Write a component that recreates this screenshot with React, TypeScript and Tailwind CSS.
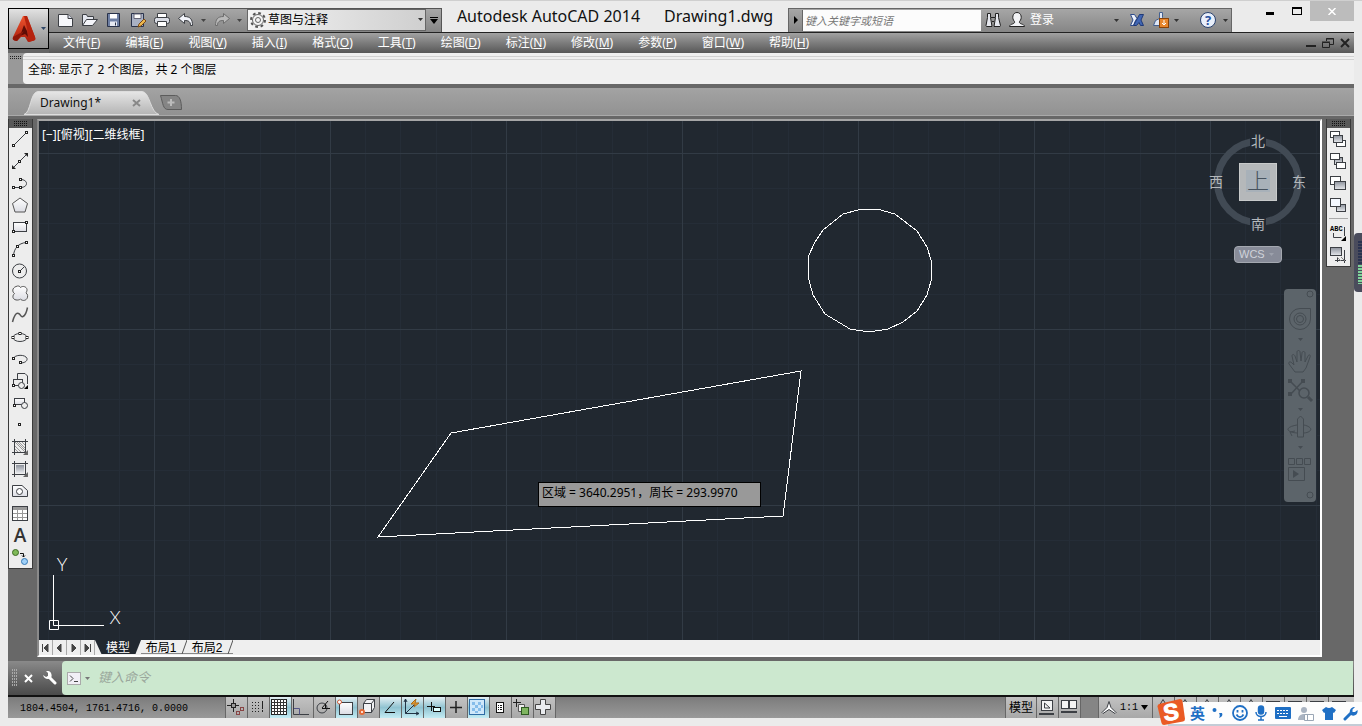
import React, { useState } from 'react';

type IconProps = { children: React.ReactNode; w?: number; h?: number; className?: string };

const Icon = ({ children, w = 18, h = 18, className = '' }: IconProps) => (
    <svg width={w} height={h} viewBox={`0 0 ${w} ${h}`} fill="none" stroke="#3c3f44" className={`shrink-0 overflow-visible ${className}`}>
        {children}
    </svg>
);

// small grip handle
const Dot = ({ x, y }: { x: number; y: number }) => (
    <rect x={x - 1} y={y - 1} width="2" height="2" fill="#fff" stroke="#222" />
);

const Caret = ({ className = '' }: { className?: string }) => (
    <svg width="5" height="3" viewBox="0 0 5 3" className={`shrink-0 ${className}`}>
        <path d="M0 0h5L2.5 3z" fill="currentColor" />
    </svg>
);

const drawTools = [
    { name: '直线', icon: <><path d="M2.5 15.5l13-13" /><Dot x={2.5} y={15.5} /><Dot x={15.5} y={2.5} /></> },
    { name: '构造线', icon: <><path d="M2 16L16 2" /><path d="M1 17v-4l4 4zM17 1v4l-4-4z" fill="#222" stroke="none" /><Dot x={8.5} y={9.5} /></> },
    { name: '多段线', icon: <><path d="M2.5 13.5h7c8 0 8-8 0-8" /><Dot x={2.5} y={13.5} /><Dot x={9.5} y={13.5} /><Dot x={9.5} y={5.5} /></> },
    { name: '正多边形', icon: <path d="M9 2l7.5 5.5L14 16H4L1.500 7.500z" fill="url(#sheen)" stroke="#555" /> },
    { name: '矩形', icon: <><rect x="2.500" y="4.500" width="13" height="9" fill="url(#sheen)" /><Dot x={2.5} y={13.5} /><Dot x={15.5} y={4.5} /></> },
    { name: '圆弧', icon: <><path d="M2.500 15.500C3 9 7 3 15.500 2.500" /><Dot x={2.5} y={15.5} /><Dot x={6.5} y={6.5} /><Dot x={15.5} y={2.5} /></> },
    { name: '圆', icon: <><circle cx="8.500" cy="9" r="7" /><path d="M9 9l4-4" /><Dot x={8.5} y={9.5} /></> },
    { name: '修订云线', icon: <path d="M5 2.500c2-1 4-.5 4.500 1 2-2 6-1 6.500 2 .2 2-1 3-1 3.500 2 1 2 4 1 5.500-2 3-5.500 2-6.500.5C7 17 2.500 16 2 13.500c-.3-2 .5-3 1.500-4C1 8 1 4 5 2.500z" fill="url(#sheen)" stroke="#555" /> },
    { name: '样条曲线', icon: <path d="M1.500 16C3 10 5 6.500 7.500 7.500s2 4 4.500 3 3.500-4 4.500-9" strokeWidth="1.500" stroke="#555" /> },
    { name: '椭圆', icon: <><ellipse cx="9" cy="9.500" rx="7" ry="4" /><Dot x={2} y={9.5} /><Dot x={16} y={9.5} /><Dot x={9} y={5.5} /></> },
    { name: '椭圆弧', icon: <><path d="M2.500 8.500c1-4 12-4.500 13.500 0 .5 3-3 4.500-6.500 4.500" /><Dot x={2.5} y={8.5} /><Dot x={9.5} y={12.5} /></> },
    { name: '插入块', icon: <><path d="M6.500 7V1.500H14L16.500 4v8" /><rect x="2.500" y="7.500" width="9" height="6" /><circle cx="10.500" cy="13.500" r="3" fill="#eee" /><Dot x={2.5} y={13.5} /><path d="M17 13v4h-4z" fill="#000" stroke="none" /></> },
    { name: '创建块', icon: <><rect x="3.500" y="4.500" width="10" height="6" fill="url(#sheen)" /><circle cx="13.500" cy="11.500" r="3" fill="#eee" /><Dot x={3.500} y={11.500} /></> },
    { name: '点', icon: <Dot x={8.5} y={8.5} /> },
    { name: '图案填充', icon: <><path d="M3.500 1v16M14.500 1v16M1 3.500h16M1 14.500h16" /><path d="M4 8l6 6M4 4l10 10M8 4l6 6M4 11l3 3M11 4l3 3M6 4l8 8" stroke="#999" /><path d="M17 12v5h-5z" fill="#666" stroke="none" /></> },
    { name: '渐变色', icon: <><rect x="5" y="5" width="8" height="8" fill="url(#steel)" stroke="none" /><path d="M3.500 1v16M14.500 1v16M1 3.500h16M1 14.500h16" /><path d="M17 12v5h-5z" fill="#666" stroke="none" /></> },
    { name: '面域', icon: <><path d="M1.500 3.500H11l5.500 5v6h-15z" fill="url(#sheen)" /><circle cx="8.500" cy="9.500" r="3" fill="#fff" /></> },
    { name: '表格', icon: <><rect x="1.500" y="2.500" width="15" height="14" fill="#fff" /><path d="M2 4.500h14" stroke="#999" strokeWidth="3" /><path d="M6.500 6v10M11.500 6v10M2 9.500h14M2 13.500h14" stroke="#999" /></> },
    { name: '多行文字', icon: <text x="9" y="16" textAnchor="middle" fontSize="19" fontFamily="Open Sans" fontWeight="600" fill="#333" stroke="none">A</text> },
    { name: '添加选定对象', icon: <><circle cx="4.500" cy="4.500" r="3" fill="#7fba58" stroke="#3d6b25" /><circle cx="13.500" cy="13.500" r="3" fill="#9fd0f8" stroke="#3779b5" /><path d="M9 5.500h3.500V9M11 7.500l1.500 1.500L14 7.500" stroke="#111" /></> },
];

const orderTools = [
    { name: '前置', icon: <><rect x="1.500" y="1.500" width="9" height="6" fill="#fff" /><rect x="7.500" y="10.500" width="9" height="6" fill="#fff" /><rect x="4.500" y="5.500" width="9" height="7" fill="url(#steel)" /></> },
    { name: '后置', icon: <><rect x="5.500" y="5.500" width="8" height="7" fill="url(#steel)" /><rect x="1.500" y="1.500" width="9" height="6" fill="#fff" /><rect x="7.500" y="10.500" width="9" height="6" fill="#fff" /></> },
    { name: '置于对象之上', icon: <><rect x="1.500" y="2.500" width="10" height="8" fill="#fff" /><rect x="5.500" y="7.500" width="11" height="8" fill="url(#steel)" /></> },
    { name: '置于对象之下', icon: <><rect x="7.500" y="8.500" width="9" height="7" fill="url(#steel)" /><rect x="1.500" y="2.500" width="10" height="8" fill="#f4f8ff" /></> },
];

const annoTools = [
    { name: '文字前置', icon: <><text x="1" y="7" fontSize="7" fontFamily="Liberation Mono" fontWeight="700" fill="#000" stroke="none">ABC</text><path d="M4.500 9v4.500h8M15.500 3v9" /><path d="M17 12v5h-5z" fill="#000" stroke="none" /></> },
    { name: '图案填充后置', icon: <><rect x="1.500" y="1.500" width="11" height="8" fill="url(#steel)" /><path d="M15.500 4v13M6 14.500h11M8.500 11v5" /><path d="M8 11l4 4M12 11l4 4" stroke="#888" /></> },
];

const menus = [
    ['文件', 'F'], ['编辑', 'E'], ['视图', 'V'], ['插入', 'I'], ['格式', 'O'], ['工具', 'T'],
    ['绘图', 'D'], ['标注', 'N'], ['修改', 'M'], ['参数', 'P'], ['窗口', 'W'], ['帮助', 'H'],
];

const quickTools = [
    { name: '新建', icon: <><path d="M1.500 3.500H11l4.500 4v8h-14z" fill="#f6f7fb" /><path d="M11 3.500v4h4.500" fill="#d5d9e6" /></> },
    { name: '打开', icon: <><path d="M1.500 14.500v-11h4l1 2h6v3" fill="#e3e6ee" /><path d="M1.500 14.500l4-6h11l-5 6z" fill="#f4f5fa" /></> },
    { name: '保存', icon: <><path d="M2.500 2.500h12v13h-12z" fill="#6e7fa3" stroke="#29324a" /><path d="M5 3h7v4.500H5z" fill="#fff" stroke="none" /><path d="M5 10.500h7V15H5z" fill="#e7eaf2" stroke="none" /><path d="M10.500 11.500v3" stroke="#29324a" /></> },
    { name: '另存为', icon: <><path d="M2.500 2.500h12v13h-12z" fill="#a9b1c4" stroke="#29324a" /><path d="M5 3h7v4.500H5z" fill="#fff" stroke="#667" /><path d="M9 16l1-3 5-5 2 2-5 5z" fill="#ecb64d" stroke="#7b4b16" /></> },
    { name: '打印', icon: <><path d="M4.500 7V2.500h9V7" fill="#fff" /><rect x="1.500" y="6.500" width="15" height="6" rx="2" fill="#d9dce4" /><path d="M4.500 10.500h9v5h-9z" fill="#fff" /></> },
];

const winTools = [
    { on: false, name: '推断约束', icon: <><path d="M1 7.500h12M7.500 1v13" stroke="#222" /><rect x="5.500" y="5.500" width="4" height="4" fill="#999" stroke="#222" /><rect x="14.500" y="9.500" width="3" height="3" stroke="#844" /><rect x="10.500" y="13.500" width="3" height="3" stroke="#844" /></> },
    { on: false, name: '捕捉模式', icon: <><path d="M4 4.500h9M4 7.500h9M4 10.500h9M4 13.500h9" stroke="#222" strokeDasharray="1 2" /><path d="M14.500 3v8M14.500 12v2" stroke="#222" /></> },
    { on: true, name: '栅格显示', icon: <><rect x="1.500" y="1.500" width="15" height="15" fill="#fff" stroke="#222" /><path d="M4.500 1v16M7.500 1v16M10.500 1v16M13.500 1v16M1 4.500h16M1 7.500h16M1 10.500h16M1 13.500h16" stroke="#333" /></> },
    { on: false, name: '正交模式', icon: <><path d="M1.500 1v15.500H17" /><path d="M2 10.500h5.500v6" stroke="#558" /></> },
    { on: false, name: '极轴追踪', icon: <><circle cx="8" cy="10" r="5" /><path d="M8 10.500h8M8 10l6-7M11.500 6v4" stroke="#111" /></> },
    { on: true, name: '对象捕捉', icon: <><rect x="3.500" y="4.500" width="13" height="12" fill="url(#sheen)" /><circle cx="3.500" cy="4" r="2" fill="#fff" stroke="#cf5a35" /></> },
    { on: false, name: '三维对象捕捉', icon: <><path d="M5.500 5.500l3-4h8v8l-3 5h-8z" fill="#f2f2f4" /><path d="M5.500 5.500h8v9M13.500 5.500l3-4" /><circle cx="4" cy="14" r="2" fill="#fff" stroke="#e46a37" strokeWidth="2" /></> },
    { on: true, name: '对象捕捉追踪', icon: <path d="M14 4L5 14.500h10" stroke="#111" /> },
    { on: true, name: '动态 UCS', icon: <><path d="M3.500 1v14.500H17M3.500 15.500L12 7M2 4l1.500-3L5 4M14 14l3 1.500-3 1.500" stroke="#234" /><path d="M9 6l5-5-1 4h4l-5 4 1-3z" fill="#f0a632" stroke="#a8691a" /></> },
    { on: true, name: '动态输入', icon: <><path d="M3 8.500h8M7.500 4v9" stroke="#111" /><rect x="9.500" y="9.500" width="7" height="4" fill="#dff" stroke="#111" /></> },
    { on: false, name: '线宽', icon: <path d="M4 9.500h12M10 3v12" stroke="#222" strokeWidth="1.500" /> },
    { on: true, name: '透明度', icon: <><rect x="1.500" y="1.500" width="15" height="15" fill="#cfe8fa" stroke="#2e6ca5" /><path d="M4 4h3v3H4zM10 4h3v3h-3zM7 7h3v3H7zM4 10h3v3H4zM10 10h3v3h-3zM13 7h2v3h-2zM7 13h3v2H7z" fill="#86bdea" stroke="none" /></> },
    { on: false, name: '快捷特性', icon: <><rect x="6.500" y="4.500" width="7" height="10" fill="#fff" stroke="#111" /><path d="M8 7.500h1M10 7.500h2M8 9.500h1M10 9.500h2M8 11.500h1M10 11.500h2" stroke="#111" /></> },
    { on: false, name: '选择循环', icon: <><path d="M1 4.500h8M4.500 1v8" stroke="#222" /><path d="M6.500 6.500h6v7h-6z" fill="#eee" stroke="#555" /><rect x="9.500" y="9.500" width="7" height="7" fill="#7fb560" stroke="#2e5a20" /></> },
    { on: false, name: '注释监视器', icon: <path d="M6.500 1.500h5v5h5v5h-5v5h-5v-5h-5v-5h5z" fill="#e9ebee" stroke="#444" /> },
];

const Grip = () => (
    <div className="flex h-[9px] items-center justify-center bg-[#585858]">
        <svg width="13" height="5"><path d="M0 .5h13M0 2.500h13M0 4.500h13" stroke="#111" strokeDasharray="1 1" /></svg>
    </div>
);

const ToolButton = ({ name, icon }: { name: string; icon: React.ReactNode }) => (
    <button aria-label={name} className="flex h-[22px] w-full items-center pl-[2px]">
        <Icon>{icon}</Icon>
    </button>
);

const Defs = () => (
    <svg width="0" height="0" className="absolute">
        <defs>
            <linearGradient id="sheen" x1="0" y1="0" x2="0" y2="1"><stop offset="0" stopColor="#fff" /><stop offset="1" stopColor="#dcdde4" /></linearGradient>
            <linearGradient id="steel" x1="0" y1="0" x2="0" y2="1"><stop offset="0" stopColor="#8d929c" /><stop offset="1" stopColor="#e6e8ec" /></linearGradient>
            <linearGradient id="tab" x1="0" y1="0" x2="0" y2="1"><stop offset="0" stopColor="#e6e6e6" /><stop offset="1" stopColor="#b4b4b4" /></linearGradient>
            <linearGradient id="red" x1="0" y1="0" x2="0" y2="1"><stop offset="0" stopColor="#f0562f" /><stop offset="1" stopColor="#a81c0c" /></linearGradient>
        </defs>
    </svg>
);

const TitleRow = () => (
    <div className="flex h-[31px] items-end">
        <div className="flex h-6 w-[393px] items-center border-t border-r border-[#555] bg-linear-to-b from-[#a6a6a6] to-[#868686] pb-px pl-2">
            <div className="flex gap-[6px]">
                {quickTools.map((t) => (
                    <button key={t.name} aria-label={t.name}><Icon>{t.icon}</Icon></button>
                ))}
                <button aria-label="放弃"><Icon><path d="M1.500 7.500l6-5v3c6 0 8 3 8 9h-2c0-4-2-5-6-5v3z" fill="#f2f4fa" /></Icon></button>
            </div>
            <Caret className="mr-2 ml-[6px] text-[#444]" />
            <button aria-label="重做"><Icon><path d="M15.500 7.500l-6-5v3c-6 0-8 3-8 9h2c0-4 2-5 6-5v3z" fill="#b9b9b9" stroke="#6d6d6d" /></Icon></button>
            <Caret className="ml-[5px] text-[#444]" />
            <div className="relative ml-[5px] h-[22px] flex-1">
                <Icon className="absolute top-[2px] left-[2px] z-10">
                    <circle cx="9" cy="9" r="7" strokeWidth="2" strokeDasharray="2.750 2.750" stroke="#555" />
                    <circle cx="9" cy="9" r="5.500" stroke="#666" fill="#f4f4f4" /><circle cx="9" cy="9" r="2.500" stroke="#666" />
                </Icon>
                <select aria-label="工作空间" className="block h-full w-full appearance-none border border-[#666] bg-linear-to-r from-[#f4f4f4] to-[#cfcfcf] pl-5 text-xs text-black">
                    <option>草图与注释</option>
                </select>
                <Caret className="absolute top-[9px] right-[3px] text-[#333]" />
            </div>
            <button aria-label="自定义" className="flex h-full w-[15px] items-center justify-center">
                <svg width="8" height="7"><path d="M0 .5h8" stroke="#000" /><path d="M0 2h8L4 7z" /></svg>
            </button>
        </div>
        <h1 className="flex h-7 flex-1 justify-center gap-6 text-base leading-6 whitespace-nowrap text-[#111]">
            <span>Autodesk AutoCAD 2014</span>
            <span>Drawing1.dwg</span>
        </h1>
        <div className="flex h-6 w-[444px] items-center border-t border-r border-l border-[#666] bg-linear-to-b from-[#a6a6a6] to-[#868686] pb-px">
            <button aria-label="展开" className="flex h-full w-[13px] items-center justify-center">
                <svg width="4" height="8"><path d="M0 0l4 4-4 4z" /></svg>
            </button>
            <input aria-label="搜索" placeholder="键入关键字或短语" className="h-[21px] w-[179px] border-l border-[#666] bg-[#fcfcfc] pl-[2px] text-[11px] italic outline-none placeholder:text-[#777]" />
            <button aria-label="查找" className="ml-[3px]"><Icon>
                <path d="M3.500 2.500h3v4l1.500 9H2.500l-.5-1 1.500-8zM11.500 2.500h3v4l2 8-.5 1H10l1.500-9z" fill="#e6e8ee" stroke="#222" /><path d="M7 6.500h4M8 10.500h2" stroke="#222" />
            </Icon></button>
            <button className="ml-[6px] flex items-center gap-[4px] text-xs text-white">
                <Icon><path d="M1.500 15.500c0-3 6-2 5-5-3-3-2-9 2.500-9s5.500 6 2.500 9c-1 3 5 2 5 5z" fill="#f2f3f6" stroke="#222" /></Icon>登录
            </button>
            <Caret className="ml-[60px] text-[#333]" />
            <button aria-label="Exchange" className="ml-[9px]"><Icon>
                <path d="M2.500 3.500h4l2.500 4-1.500 2-2 5h-3L5 9z" fill="#eef2fb" stroke="#2e4c8c" /><path d="M15.500 3.500h-4L5.500 14.500h3l2.500-3 1.500 3h3L13 9z" fill="#4166b3" stroke="#213a78" />
            </Icon></button>
            <button aria-label="更新" className="ml-[6px]"><Icon>
                <path d="M7.500 1.500h3v5l-3 8h-6l2-5 4-2z" fill="#dfe7f5" stroke="#44608f" /><rect x="7.500" y="7.500" width="9" height="9" fill="#e8862c" stroke="#8a4308" /><path d="M12 9v5M10 12l2 2 2-2" stroke="#fff" />
            </Icon></button>
            <Caret className="ml-1 text-[#333]" />
            <button aria-label="帮助" className="ml-5"><Icon>
                <circle cx="9" cy="9" r="7.500" fill="#e9effa" stroke="#2a426f" /><text x="9" y="14" textAnchor="middle" fontSize="13" fontFamily="Open Sans" fontWeight="700" fill="#27509e" stroke="none">?</text>
            </Icon></button>
            <Caret className="ml-[6px] text-[#333]" />
        </div>
        <div className="flex h-full w-[122px] items-start justify-end">
            <button aria-label="最小化" className="flex h-5 w-7 items-center justify-center"><span className="mt-1 h-[3px] w-2 bg-black" /></button>
            <button aria-label="最大化" className="flex h-5 w-[26px] items-center justify-center"><span className="h-2 w-[10px] border border-t-2 border-black" /></button>
            <button aria-label="关闭" className="flex h-5 w-11 items-center justify-center bg-[#bcbcbc]">
                <svg width="8" height="7"><path d="M.5 0l7 7M7.500 0l-7 7" stroke="#fff" strokeWidth="1.500" /></svg>
            </button>
        </div>
    </div>
);

const MenuRow = () => (
    <nav className="flex h-[21px] items-center border-t border-[#222] bg-linear-to-b from-[#a2a2a2] to-[#585858] pr-1 pl-[14px] text-xs text-white">
        <div className="flex flex-1 gap-[25px]">
            {menus.map(([label, key]) => (
                <button key={key} className="leading-4 whitespace-nowrap">{label}(<u>{key}</u>)</button>
            ))}
        </div>
        <div className="flex items-center gap-[6px]">
            <button aria-label="最小化图形"><Icon w={10} h={12}><path d="M0 9h10" stroke="#222" strokeWidth="2" /></Icon></button>
            <button aria-label="还原图形"><Icon w={12} h={12}><path d="M4.500 4V1.500h7v6H8M4 2h8" stroke="#222" /><path d="M.5 5.500h7v5h-7zM0 5h8" stroke="#222" /></Icon></button>
            <button aria-label="关闭图形"><Icon w={10} h={12}><path d="M1 2l8 8M9 2l-8 8" stroke="#222" strokeWidth="2" /></Icon></button>
        </div>
    </nav>
);

const Drawing = () => (
    <svg className="absolute inset-0 h-full w-full" fill="none" stroke="#fff">
        <defs>
            <pattern id="grid" width="176" height="176" x="115" y="32" patternUnits="userSpaceOnUse">
                <path d="M35.500 0v176M70.500 0v176M106.500 0v176M141.500 0v176M0 35.500h176M0 70.500h176M0 106.500h176M0 141.500h176" stroke="#252d37" />
                <path d="M.5 0v176M0 .5h176" stroke="#323b45" />
            </pattern>
        </defs>
        <rect width="100%" height="100%" fill="url(#grid)" stroke="none" />
        <g shapeRendering="crispEdges">
            <polygon points="823,88 838,88 856,93 878,110 888,126 892,139 892,160 888,174 878,190 864,201 849,208 830,211 811,208 786,193 774,174 770,159 769,149 770,134 776,121 784,109 804,93" />
            <polygon points="412,312 762,250 744,395 339,416" />
        </g>
        <path d="M14.500 454v45M19 504.500h46M10.500 499.500h9v9h-9zM14.500 500v4.500H19" />
        <g fill="#fff" stroke="none" fontFamily="Lato" fontWeight="300" fontSize="18" textAnchor="middle">
            <text x="23" y="450">Y</text>
            <text x="76" y="503">X</text>
        </g>
    </svg>
);

const ViewCube = () => (
    <div className="absolute top-[12px] right-[13px] flex w-[98px] flex-col items-center">
        <svg width="98" height="100" viewBox="0 0 98 100" fontFamily="Noto Sans CJK SC" textAnchor="middle" className="block overflow-visible">
            <circle cx="49" cy="49" r="40.500" fill="none" stroke="#414a54" strokeWidth="7" />
            <path d="M41 3h16v12H41zM41 84h16v14H41z" fill="#222933" />
            <rect x="30.500" y="30.500" width="37" height="37" fill="#b5b8ba" stroke="#c8caca" />
            <rect x="37" y="37" width="24" height="22" fill="#a8b1b9" />
            <g fontSize="14" fill="#b4b8bb">
                <text x="49" y="13">北</text>
                <text x="49" y="96">南</text>
                <text x="7" y="54">西</text>
                <text x="90" y="54">东</text>
            </g>
            <text x="49" y="56" fontSize="22" fontWeight="300" fill="#47535f">上</text>
        </svg>
        <button className="mt-[13px] flex h-[17px] w-12 items-center gap-1 rounded border border-[#a4a8b0] bg-[#878b98] pl-1 font-[Liberation_Sans] text-[11px] leading-none text-[#d0d3da]">
            WCS<Caret className="text-[#9da1ac]" />
        </button>
    </div>
);

const NavBar = () => (
    <div className="absolute top-[168px] right-1 flex h-[213px] w-8 flex-col items-center rounded bg-[#5c646a]">
        <svg width="32" height="212" fill="none" stroke="#454c52">
            <circle cx="26" cy="5" r="3" /><circle cx="26" cy="206" r="3" />
            <path d="M16 19.500h10.500V30A10.500 10.500 0 1 1 16 19.500z" /><circle cx="16" cy="30" r="6" /><circle cx="16" cy="30" r="3.500" />
            <path d="M14 49h5l-2.500 3zM14 119h5l-2.500 3zM14 157h5l-2.500 3z" fill="#454c52" stroke="none" />
            <path d="M11 83L5 75c-1-2 1-3 3-1l2 2-2-9c0-2 2-2 3 0l2 6V63c0-2 3-2 3 0l1 9 1-8c0-2 3-2 3 0v9l3-6c1-2 3-1 2 1l-4 11-3 4z" />
            <path d="M6 92l15 15M19 92L6 106" strokeWidth="1.500" /><circle cx="20" cy="104" r="5" fill="#5c646a" strokeWidth="1.500" /><path d="M24 108l4 4" strokeWidth="3" />
            <path d="M4 90h4v4H4zM17 90h4v4h-4zM4 103h4v4H4z" fill="#454c52" stroke="none" />
            <path d="M13.500 148v-18l3-3 3 3v18zM13 136c-12 2-12 7 0 8M20 136c9 2 9 7 0 8M8 147l-2-4 5-1" />
            <path d="M4.500 169.500h6v6h-6zM12.500 169.500h6v6h-6zM20.500 169.500h6v6h-6zM4.500 178.500h16v13h-16z" /><path d="M9 181l6 4-6 4z" fill="#454c52" stroke="none" />
        </svg>
    </div>
);

const Canvas = () => (
    <main className="flex min-w-0 flex-1 flex-col border-2 border-t-[#a6a6a6] border-r-white border-b-white border-l-[#8a8a8a]">
        <div className="relative flex-1 overflow-hidden bg-[#212830]">
            <Drawing />
            <p className="absolute top-[6px] left-[3px] text-xs leading-4 text-white">[−][俯视][二维线框]</p>
            <ViewCube />
            <NavBar />
            <div className="absolute top-[361px] left-[499px] h-[25px] w-[223px] border border-black bg-[#999] pl-[3px] text-xs leading-5 whitespace-nowrap text-black">
                区域 = 3640.2951，周长 = 293.9970
            </div>
        </div>
        <div className="flex h-[15px] items-stretch bg-[#efefef] font-[Liberation_Sans,Noto_Sans_CJK_SC,sans-serif] text-xs leading-4 text-black">
            {['M3.500 3v8M9 3v8L5 7z', 'M8 3v8L4 7z', 'M5 3v8l4-4z', 'M4 3v8l4-4zM9.500 3v8'].map((d, i) => (
                <button key={i} aria-label={`翻页 ${i + 1}`} className="flex w-[14px] items-center justify-center border-r border-[#aaa]">
                    <svg width="13" height="14"><path d={d} fill="#444" stroke="#444" /></svg>
                </button>
            ))}
            {['模型', '布局1', '布局2'].map((t, i) => (
                <button key={t} className={i === 0 ? 'relative h-[14px] w-[46px] bg-[#212830] text-white [clip-path:polygon(0_0,100%_0,88%_100%,14%_100%)]' : 'relative h-[14px] w-[46px] border-b border-[#888] pr-[6px]'}>
                    {t}
                    {i > 0 && <svg width="6" height="14" className="absolute top-0 right-0"><path d="M6 0L1 14" stroke="#555" /></svg>}
                </button>
            ))}
        </div>
    </main>
);

const StatusBar = () => (
    <footer className="flex h-[21px] items-stretch bg-linear-to-b from-[#7c7c7c] to-[#999]">
        <p className="w-[217px] pl-3 font-[Liberation_Mono] text-[10px] leading-6 whitespace-pre text-black">1804.4504, 1761.4716, 0.0000</p>
        <div className="flex border-r border-[#666]">
            {winTools.map((t) => (
                <button
                    key={t.name}
                    aria-label={t.name}
                    className={`flex w-[22px] items-start border-l border-[#666] pt-px ${t.on ? 'bg-linear-to-b from-[#e4eff3] via-[#90c3d1] to-[#c4ecf4]' : 'bg-linear-to-b from-[#c2c2c2] to-[#a8a8a8]'}`}
                >
                    <Icon>{t.icon}</Icon>
                </button>
            ))}
        </div>
        <div className="ml-auto flex bg-linear-to-b from-[#c2c2c2] to-[#a8a8a8] pr-1 text-xs text-black">
            <button className="w-[31px] border-l border-[#666]">模型</button>
            <button aria-label="快速查看布局" className="flex w-[22px] items-start border-l border-[#666] pt-px">
                <Icon><rect x="4.500" y="2.500" width="11" height="10" fill="#f4f4f4" /><path d="M7.500 5v5H13z" /><path d="M2 16h15" strokeWidth="2" /></Icon>
            </button>
            <button aria-label="快速查看图形" className="flex w-[22px] items-start border-l border-[#666] pt-px">
                <Icon><rect x="2.500" y="2.500" width="7" height="8" fill="#f4f4f4" /><rect x="10.500" y="2.500" width="7" height="8" fill="#f4f4f4" /><path d="M2 14h16" strokeWidth="2" /></Icon>
            </button>
            <div className="w-[18px] border-l border-[#666] bg-[#858585]" />
            <button className="flex w-[54px] items-center gap-[3px] border-l border-[#666] pl-[2px] font-[Liberation_Mono] text-[10px]">
                <Icon w={16}><path d="M8 2.500l2 6 5 5-1 1-6-4-6 4-1-1 5-5z" fill="#fff" /></Icon>1:1
                <svg width="7" height="5"><path d="M0 0h7L3.500 5z" /></svg>
            </button>
            {[0, 1, 2, 3, 4, 5, 6, 7, 8].map((i) => (
                <div key={i} className="flex w-[22px] items-start border-l border-[#666] pl-px">
                    <Icon>{i > 4 ? <path d="M2 4.500h14" /> : <path d="M9 2.500l3 5H6z" />}</Icon>
                </div>
            ))}
        </div>
    </footer>
);

const ImeBar = () => (
    <div className="absolute right-0 bottom-0 flex h-6 w-[194px] items-center border-b-2 border-[#c3ccd6] bg-[#fdfdfd] pl-[22px] text-[#1f6fc4]">
        <svg width="30" height="28" viewBox="0 0 30 28" className="absolute -top-1 -left-3 overflow-visible">
            <path d="M3 6L24 1q2 0 2.500 2l2.500 18q0 2-2 2.500L8 27q-2 0-2.500-2L1.500 8.500Q1.500 6.500 3 6z" fill="#ea5a24" />
            <text x="15" y="22" textAnchor="middle" fontFamily="Liberation Sans" fontWeight="700" fontSize="23" fill="#fff" stroke="#fff" transform="rotate(-8 15 14)">S</text>
        </svg>
        <button className="w-[22px] text-left text-[15px] leading-5 font-bold">英</button>
        <div className="flex flex-1 items-center justify-between pr-1">
            <svg width="12" height="14"><circle cx="2.500" cy="4" r="2" fill="currentColor" /><path d="M7 7h3c1 2 0 4-3 5 1-2 1-3 0-5z" fill="currentColor" /></svg>
            <svg width="16" height="16" fill="none" stroke="currentColor" strokeWidth="1.800"><circle cx="8" cy="8" r="7" /><path d="M5.500 5v2.500M10.500 5v2.500M4.500 9.500c2 3.500 5 3.500 7 0" /></svg>
            <svg width="12" height="16" fill="none" stroke="currentColor" strokeWidth="1.500"><rect x="3.500" y="1" width="5" height="8" rx="2.500" fill="currentColor" /><path d="M1 7c0 6 10 6 10 0M6 12v3M3 15h6" /></svg>
            <svg width="16" height="12"><rect width="16" height="12" rx="1" fill="currentColor" /><path d="M2 3.500h12M2 6.500h12" stroke="#fff" strokeDasharray="2 1" /><path d="M4 9.500h8" stroke="#fff" /></svg>
            <svg width="16" height="15"><circle cx="6" cy="4" r="3" fill="#aab4c2" /><path d="M0 14c0-8 12-8 12 0z" fill="#aab4c2" /><path d="M6.500 8.500h9v6h-9zM9.500 9v5" fill="#fff" stroke="#9aa6b5" /></svg>
            <svg width="14" height="14"><path d="M4 1q3 2 6 0l4 3-2 3-1-.5V14H3V6.500L2 7 0 4z" fill="currentColor" /></svg>
            <svg width="15" height="15"><path d="M2 13l6-6" stroke="currentColor" strokeWidth="3" strokeLinecap="round" /><path d="M12 1L9.500 3.500v2.500H12L14.500 4c1 4-3 7-6.500 5C5 5 8 1 12 1z" fill="currentColor" /></svg>
        </div>
    </div>
);

const App: React.FC = () => {
    const [command, setCommand] = useState('');

    return (
        <div className="relative flex h-screen flex-col overflow-hidden border-t border-[#cfcfcf] bg-[#ebebeb] px-2 pb-2 font-[Noto_Sans,Noto_Sans_CJK_SC,sans-serif]">
            <Defs />
            <header className="flex">
                <div className="mt-[7px] h-[45px] w-[41px] bg-[#666]">
                    <button aria-label="应用程序菜单" className="flex h-[41px] w-full items-center border border-black bg-linear-to-b from-[#e2e2e2] via-[#b4b4b4] to-[#909090] pl-[3px]">
                        <svg width="26" height="31" viewBox="0 0 26 31">
                            <path d="M11 3h4l8 21q1 3-1 3.500l-6 1.500-3-5H9l-4 4-3.500-1Q0 26.500 1 24z" fill="url(#red)" />
                            <path d="M12 3l3 12 2 14 5-1.500q2-.5 1-3.500L15 3z" fill="#b5230f" />
                            <path d="M12 12l-4 11 5-2 3 3-1-6z" fill="#5e0d06" />
                            <path d="M1 24l11-6-4 6-3 4q-5 0-4-4z" fill="#8e1709" />
                        </svg>
                        <Caret className="ml-[3px] text-[#2e4666]" />
                    </button>
                </div>
                <div className="flex min-w-0 flex-1 flex-col">
                    <TitleRow />
                    <MenuRow />
                </div>
            </header>

            <section className="flex h-[31px] bg-[#999]">
                <div className="flex w-[15px] justify-center pt-[3px]">
                    <svg width="12" height="4"><path d="M0 .5h12M0 2.500h12" stroke="#222" strokeDasharray="1 1" /></svg>
                </div>
                <div className="flex-1 rounded-l bg-[#f0f0f0] pt-[3px]">
                    <div className="h-1 border-y border-[#d2d2d2]" />
                    <p className="pt-[2px] pl-[5px] text-xs leading-4 text-black">全部: 显示了 2 个图层，共 2 个图层</p>
                </div>
            </section>

            <div className="flex h-8 items-end border-t-4 border-b border-t-[#686868] border-b-[#aaa] bg-linear-to-b from-[#a3a3a3] to-[#929292] pl-4">
                <div className="relative flex h-6 w-[136px] items-center pl-4 text-xs text-[#111]">
                    <svg width="136" height="24" className="absolute inset-0"><path d="M0 23.500C7 22 6 1 14 .5h104c8 0 8 21 17 23z" fill="url(#tab)" stroke="#ddd" /></svg>
                    <button className="relative w-[92px] text-left">Drawing1*</button>
                    <button aria-label="关闭选项卡" className="relative"><svg width="9" height="8"><path d="M1 1l7 6M8 1L1 7" stroke="#888" strokeWidth="2" /></svg></button>
                </div>
                <button aria-label="新图形" className="mb-1">
                    <svg width="24" height="17"><path d="M.5 1.500h15c4 0 6 5 6 14H8c-5 0-5-6-7.500-14z" fill="#858585" stroke="#5c5c5c" /><path d="M11 5v7M7.500 8.500h7" stroke="#bbb" strokeWidth="2" /></svg>
                </button>
            </div>

            <div className="flex min-h-0 flex-1 items-start bg-[#686868] pt-[3px] pr-[3px] pb-1">
                <aside className="w-[25px] border border-t-0 border-[#3a3a3a] bg-[#ededed]">
                    <Grip />
                    {drawTools.map((t) => <ToolButton key={t.name} {...t} />)}
                </aside>
                <div className="flex min-w-0 flex-1 self-stretch px-1"><Canvas /></div>
                <aside className="w-[25px] border border-t-0 border-[#3a3a3a] bg-[#ededed]">
                    <Grip />
                    {orderTools.map((t) => <ToolButton key={t.name} {...t} />)}
                    <div className="mx-[2px] my-[2px] h-[2px] border-t border-[#aaa]" />
                    {annoTools.map((t) => <ToolButton key={t.name} {...t} />)}
                </aside>
            </div>

            <div className="flex h-9 border-b-2 border-[#111] bg-linear-to-b from-[#8a8a8a] to-[#4a4a4a] pr-px">
                <div className="flex w-[54px] items-center gap-[6px] pl-1">
                    <svg width="6" height="18"><path d="M.500 0v18M2.500 0v18M4.500 0v18" stroke="#aaa" strokeDasharray="2 1" /></svg>
                    <button aria-label="关闭命令行"><svg width="9" height="9"><path d="M1 1l7 7M8 1L1 8" stroke="#fff" strokeWidth="2" /></svg></button>
                    <button aria-label="自定义命令行" className="ml-1"><svg width="14" height="14"><path d="M12 12L6 6" stroke="#fff" strokeWidth="3" strokeLinecap="round" /><path d="M0 4l3 2 2-1V2L3 0c4-1 7 3 5 7-3 2-7 1-8-3z" fill="#fff" /></svg></button>
                </div>
                <label className="flex flex-1 items-center rounded-l-sm bg-[#cce8cf] pl-[5px]">
                    <svg width="14" height="13"><rect x=".5" y=".5" width="13" height="12" fill="#f1eff6" stroke="#aaa" /><path d="M3 3.500l3 3-3 3M7 9.500h4" fill="none" stroke="#444" /></svg>
                    <Caret className="ml-1 text-[#777]" />
                    <input
                        aria-label="命令"
                        placeholder="键入命令"
                        value={command}
                        onChange={(e) => setCommand(e.target.value)}
                        className="ml-2 flex-1 bg-transparent text-[13px] italic outline-none placeholder:text-[#9aa79c]"
                    />
                </label>
            </div>

            <StatusBar />
            <ImeBar />

            {/* floating level meter docked to the window edge */}
            <div className="absolute top-[232px] right-0 h-[59px] w-2 rounded-l bg-[#4a4c5c] pt-2 pl-1">
                <div className="h-6 bg-[repeating-linear-gradient(#2a3350_0_2px,#4a4c5c_2px_3px)]" />
                <div className="h-[19px] bg-[repeating-linear-gradient(#7fd49a_0_2px,#4a4c5c_2px_3px)]" />
            </div>
        </div>
    );
};

export default App;
